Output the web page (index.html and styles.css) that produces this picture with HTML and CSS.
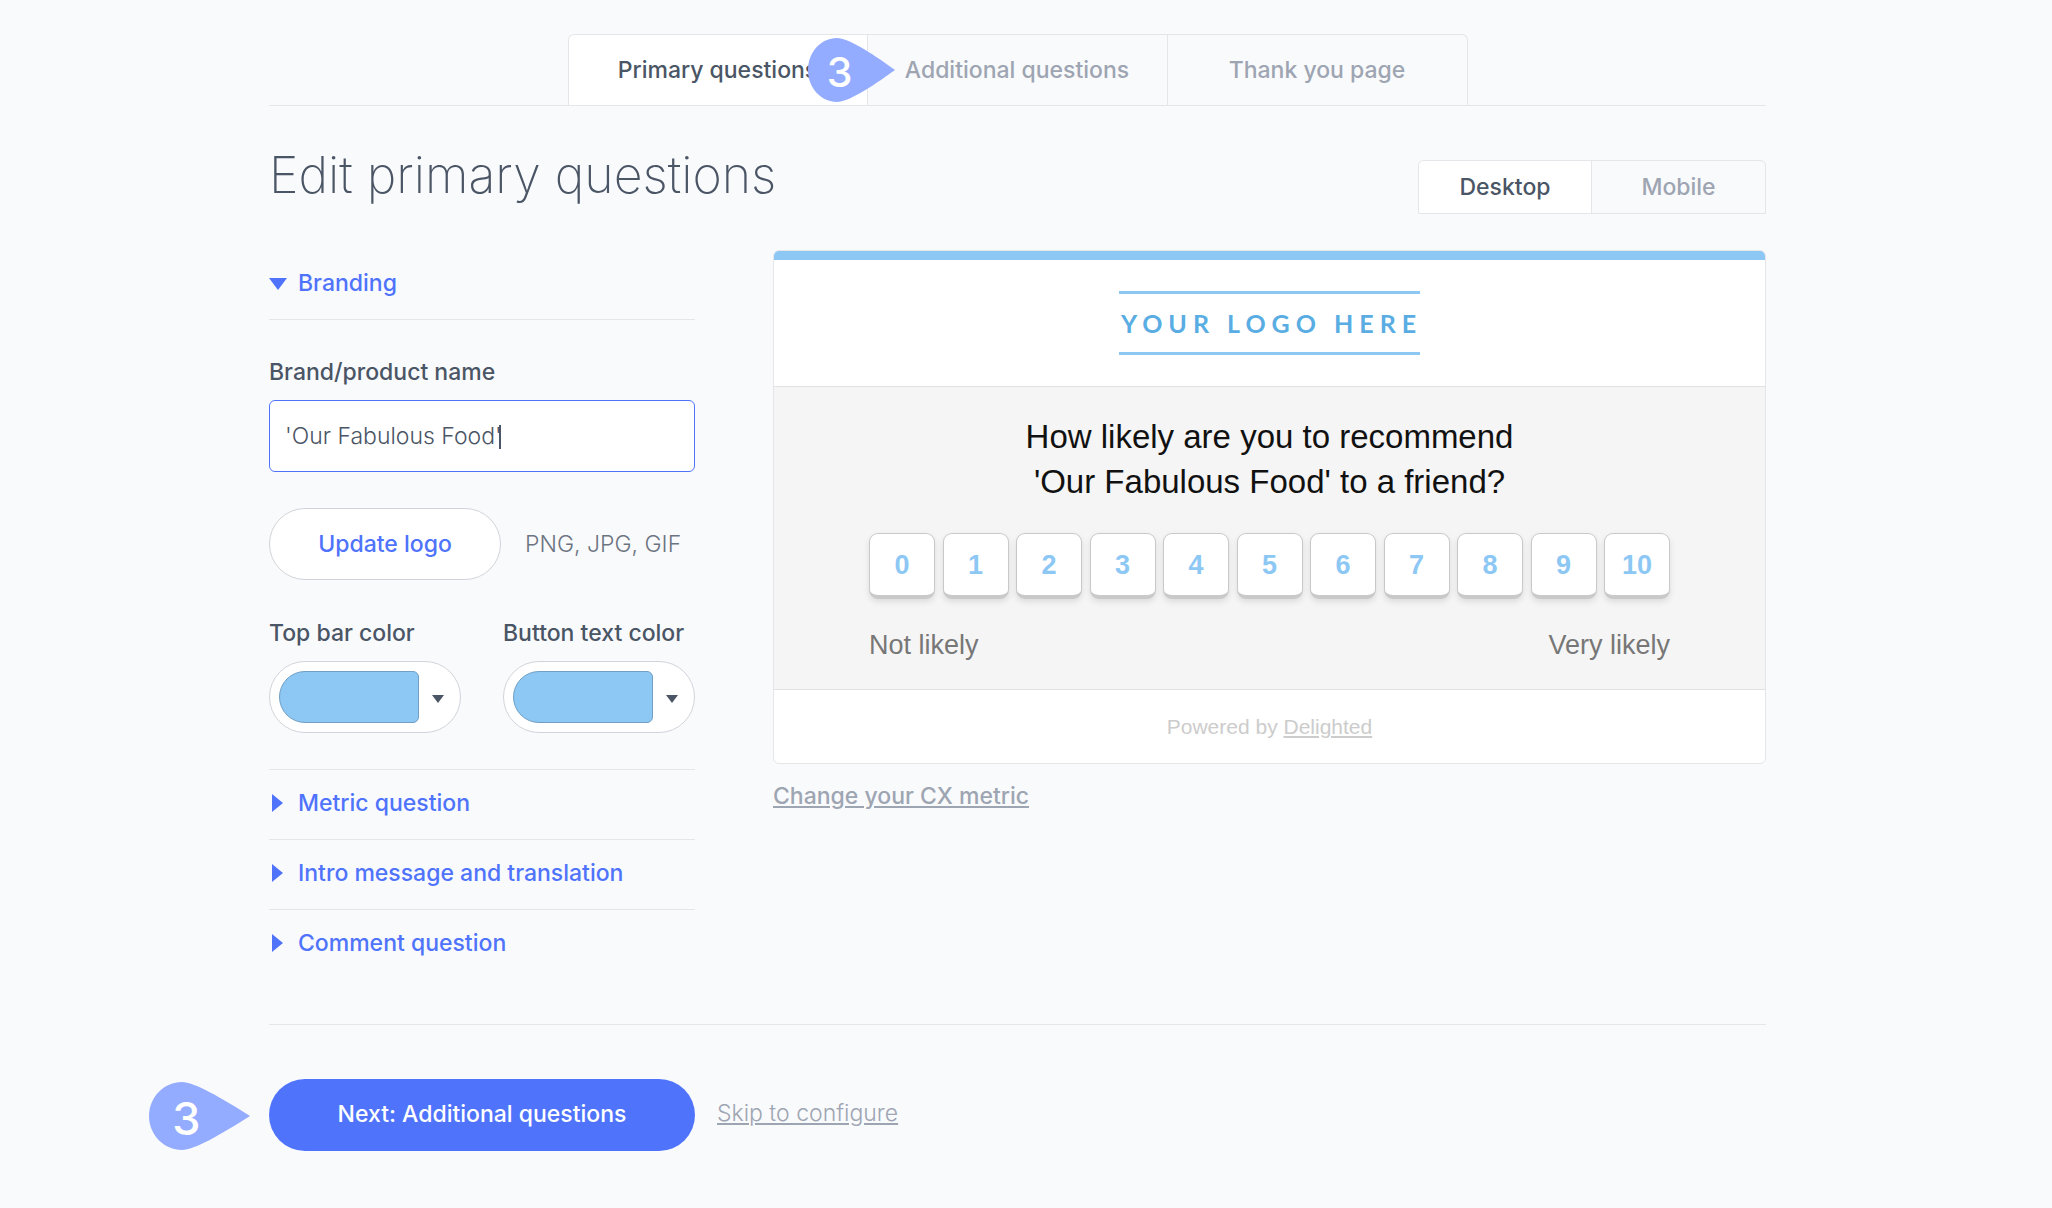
FILE: index.html
```html
<!doctype html>

<html lang="en">

<head>
  <meta charset="utf-8">
  <meta name="viewport" content="width=device-width, initial-scale=1">

  <title>Edit primary questions</title>

  <link rel="stylesheet" href="styles.css">
</head>

<body>

  <div class="container">

    <nav class="tabs">
      <a class="tab active" href="#primary">Primary questions</a>
      <a class="tab" href="#additional">Additional questions</a>
      <a class="tab" href="#thanks">Thank you page</a>
      <div class="marker marker-tab">
        <svg viewBox="0 0 87 64" width="87" height="64" aria-hidden="true">
          <path d="M29 0C13 0 0 14 0 32s13 32 29 32C40 64 62 50 87 32C62 14 40 0 29 0z" />
        </svg>
        <span>3</span>
      </div>
    </nav>

    <header class="page-header">
      <h1>Edit primary questions</h1>
      <div class="toggle">
        <button type="button" class="active">Desktop</button>
        <button type="button">Mobile</button>
      </div>
    </header>

    <main class="editor">

      <form class="settings">
        <button type="button" class="section open">
          <svg viewBox="0 0 18 18" width="18" height="18" aria-hidden="true"><path d="M0 4h18l-9 12z" /></svg>
          Branding
        </button>

        <div class="panel">
          <label for="brand">Brand/product name</label>
          <div class="text-field">
            <input type="text" id="brand" value="'Our Fabulous Food'">
            <span class="caret"></span>
          </div>

          <div class="logo-row">
            <button type="button" class="pill">Update logo</button>
            <span class="hint">PNG, JPG, GIF</span>
          </div>

          <div class="colors">
            <div>
              <label for="bar-color">Top bar color</label>
              <div class="picker">
                <input type="color" id="bar-color" value="#8dc8f5">
                <svg viewBox="0 0 12 12" width="12" height="12" aria-hidden="true"><path d="M0 4h12l-6 8z" /></svg>
              </div>
            </div>
            <div>
              <label for="text-color">Button text color</label>
              <div class="picker">
                <input type="color" id="text-color" value="#8dc8f5">
                <svg viewBox="0 0 12 12" width="12" height="12" aria-hidden="true"><path d="M0 4h12l-6 8z" /></svg>
              </div>
            </div>
          </div>
        </div>

        <button type="button" class="section">
          <svg viewBox="0 0 18 18" width="18" height="18" aria-hidden="true"><path d="M3 0v18l11-9z" /></svg>
          Metric question
        </button>
        <button type="button" class="section">
          <svg viewBox="0 0 18 18" width="18" height="18" aria-hidden="true"><path d="M3 0v18l11-9z" /></svg>
          Intro message and translation
        </button>
        <button type="button" class="section">
          <svg viewBox="0 0 18 18" width="18" height="18" aria-hidden="true"><path d="M3 0v18l11-9z" /></svg>
          Comment question
        </button>
      </form>

      <div class="preview">
        <div class="survey">
          <div class="survey-logo">
            <div class="logo">YOUR LOGO HERE</div>
          </div>
          <div class="survey-body">
            <p class="question">How likely are you to recommend<br>'Our Fabulous Food' to a friend?</p>
            <div class="scores">
              <button type="button">0</button>
              <button type="button">1</button>
              <button type="button">2</button>
              <button type="button">3</button>
              <button type="button">4</button>
              <button type="button">5</button>
              <button type="button">6</button>
              <button type="button">7</button>
              <button type="button">8</button>
              <button type="button">9</button>
              <button type="button">10</button>
            </div>
            <div class="legend">
              <span>Not likely</span>
              <span>Very likely</span>
            </div>
          </div>
          <div class="survey-footer">
            Powered by <a href="#delighted">Delighted</a>
          </div>
        </div>
        <a class="change-metric" href="#metric">Change your CX metric</a>
      </div>

    </main>

    <footer class="actions">
      <div class="marker marker-next">
        <svg viewBox="0 0 101 68" width="101" height="68" aria-hidden="true">
          <path d="M33 0C15 0 0 15 0 34s15 34 33 34C45 68 71 53 101 34C71 15 45 0 33 0z" />
        </svg>
        <span>3</span>
      </div>
      <button type="button" class="next">Next: Additional questions</button>
      <a class="skip" href="#skip">Skip to configure</a>
    </footer>

  </div>

</body>

</html>
```

FILE: styles.css
```css
* {
  box-sizing: border-box;
}

body {
  margin: 0;
  padding: 0 17px 56px 0;
  background-color: #f9fafc;
  color: #4a5565;
  font-family: Inter, "Liberation Sans", sans-serif;
  font-size: 23px;
  font-weight: 500;
  line-height: 30px;
}

button,
input {
  margin: 0;
  font: inherit;
  color: inherit;
}

button {
  cursor: pointer;
}

.container {
  max-width: 1497px;
  margin: 0 auto;
}

/* tabs */

.tabs {
  position: relative;
  display: flex;
  justify-content: center;
  padding-top: 34px;
  border-bottom: 1px solid #e4e6ea;
}

.tab {
  width: 300px;
  height: 71px;
  padding-top: 20px;
  border-top: 1px solid #e4e6ea;
  border-right: 1px solid #e4e6ea;
  color: #9ea5b2;
  text-align: center;
  text-decoration: none;
}

.tab:first-child {
  border-left: 1px solid #e4e6ea;
  border-top-left-radius: 6px;
}

.tab:nth-child(3) {
  border-top-right-radius: 6px;
}

.tab.active {
  background-color: #fff;
  color: #4a5565;
}

/* step markers */

.marker {
  position: absolute;
}

.marker svg {
  display: block;
  fill: #94acff;
}

.marker span {
  position: absolute;
  top: 0;
  left: 0;
  width: 74%;
  color: #fff;
  text-align: center;
}

.marker-tab {
  top: 38px;
  left: calc(50% - 210px);
  font-size: 41px;
  line-height: 68px;
}

.marker-next {
  top: 57px;
  left: -120px;
  font-size: 45px;
  line-height: 74px;
}

/* page header */

.page-header {
  display: flex;
  align-items: flex-end;
  justify-content: space-between;
  padding-top: 34px;
  margin-bottom: 36px;
}

h1 {
  margin: 0;
  padding-bottom: 4px;
  font-size: 50px;
  font-weight: 200;
  line-height: 70px;
}

.toggle {
  display: flex;
  border: 1px solid #e4e6ea;
  border-radius: 6px 6px 0 0;
  overflow: hidden;
}

.toggle button {
  width: 173px;
  height: 52px;
  padding: 0;
  border: 0;
  background: none;
  color: #9ea5b2;
}

.toggle .active {
  border-right: 1px solid #e4e6ea;
  background-color: #fff;
  color: #4a5565;
}

/* settings */

.editor {
  display: grid;
  grid-template-columns: 426px 1fr;
  gap: 78px;
  align-items: start;
}

.section {
  display: flex;
  align-items: center;
  gap: 11px;
  width: 100%;
  height: 70px;
  padding: 0 0 4px;
  border: 0;
  border-top: 1px solid #e4e6ea;
  background: none;
  color: #4f73fb;
}

.section svg {
  fill: #4f73fb;
}

.section.open {
  border-top: 0;
  border-bottom: 1px solid #e4e6ea;
}

.panel {
  padding: 37px 0 36px;
}

.panel label {
  display: block;
  margin-bottom: 13px;
}

.text-field {
  position: relative;
}

.text-field input {
  display: block;
  width: 100%;
  height: 72px;
  padding: 0 15px;
  border: 1px solid #4f73fb;
  border-radius: 6px;
  background-color: #fff;
  font-weight: 300;
}

.caret {
  position: absolute;
  top: 25px;
  left: 230px;
  width: 2px;
  height: 24px;
  background-color: #4a5565;
}

.logo-row {
  display: flex;
  align-items: center;
  gap: 24px;
  margin: 36px 0 38px;
}

.pill {
  width: 232px;
  height: 72px;
  border: 1px solid #d1d4db;
  border-radius: 36px;
  background-color: #fff;
  color: #4f73fb;
}

.hint {
  color: #6c7482;
  font-weight: 300;
}

.colors {
  display: grid;
  grid-template-columns: 1fr 1fr;
  gap: 42px;
  white-space: nowrap;
}

.picker {
  display: flex;
  align-items: center;
  gap: 13px;
  height: 72px;
  padding: 0 9px;
  border: 1px solid #d1d4db;
  border-radius: 36px;
  background-color: #fff;
}

.picker input {
  width: 140px;
  height: 52px;
  padding: 0;
  border: 0;
  background: none;
  appearance: none;
}

.picker input::-webkit-color-swatch-wrapper {
  padding: 0;
}

.picker input::-webkit-color-swatch {
  border: 1px solid #719fc3;
  border-radius: 26px 6px 6px 26px;
}

.picker svg {
  fill: #4a5565;
}

/* survey preview */

.survey {
  border: 1px solid #e4e6ea;
  border-radius: 6px;
  background-color: #fff;
  font-family: "Liberation Sans", Arial, sans-serif;
  font-weight: 400;
  overflow: hidden;
}

.survey-logo {
  display: flex;
  justify-content: center;
  padding: 31px 0;
  border-top: 9px solid #8dc8f5;
  border-bottom: 1px solid #e1e1e1;
}

.logo {
  width: 301px;
  padding-left: 2px;
  border-top: 3px solid #8dc8f5;
  border-bottom: 3px solid #8dc8f5;
  color: #5aade3;
  font-family: Lato, sans-serif;
  font-size: 25px;
  font-weight: 700;
  line-height: 58px;
  letter-spacing: 6px;
  text-align: center;
  white-space: nowrap;
}

.survey-body {
  padding: 27px 95px 26px;
  background-color: #f5f5f5;
}

.question {
  margin: 0 0 29px;
  color: #111;
  font-size: 33px;
  line-height: 45px;
  text-align: center;
}

.scores {
  display: flex;
  justify-content: space-between;
}

.scores button {
  width: 66px;
  height: 66px;
  padding: 0;
  border: 1px solid #c9c9c9;
  border-bottom-width: 4px;
  border-radius: 9px;
  background-color: #fff;
  box-shadow: 0 3px 6px rgba(0, 0, 0, 0.1);
  color: #8dc8f5;
  font-size: 27px;
  font-weight: 700;
}

.legend {
  display: flex;
  justify-content: space-between;
  margin-top: 28px;
  color: #777;
  font-size: 27px;
  line-height: 36px;
}

.survey-footer {
  padding: 22px 0 21px;
  border-top: 1px solid #e1e1e1;
  color: #ccc;
  font-size: 21px;
  text-align: center;
}

.survey-footer a {
  color: inherit;
}

.change-metric {
  display: inline-block;
  margin-top: 17px;
  color: #9ea5b2;
}

/* footer */

.actions {
  position: relative;
  display: flex;
  align-items: center;
  gap: 22px;
  margin-top: 45px;
  padding-top: 54px;
  border-top: 1px solid #e4e6ea;
}

.next {
  width: 426px;
  height: 72px;
  padding: 0 0 2px;
  border: 0;
  border-radius: 36px;
  background-color: #4f73fb;
  color: #fff;
}

.skip {
  padding-bottom: 4px;
  color: #9ea5b2;
  font-weight: 300;
}
```
